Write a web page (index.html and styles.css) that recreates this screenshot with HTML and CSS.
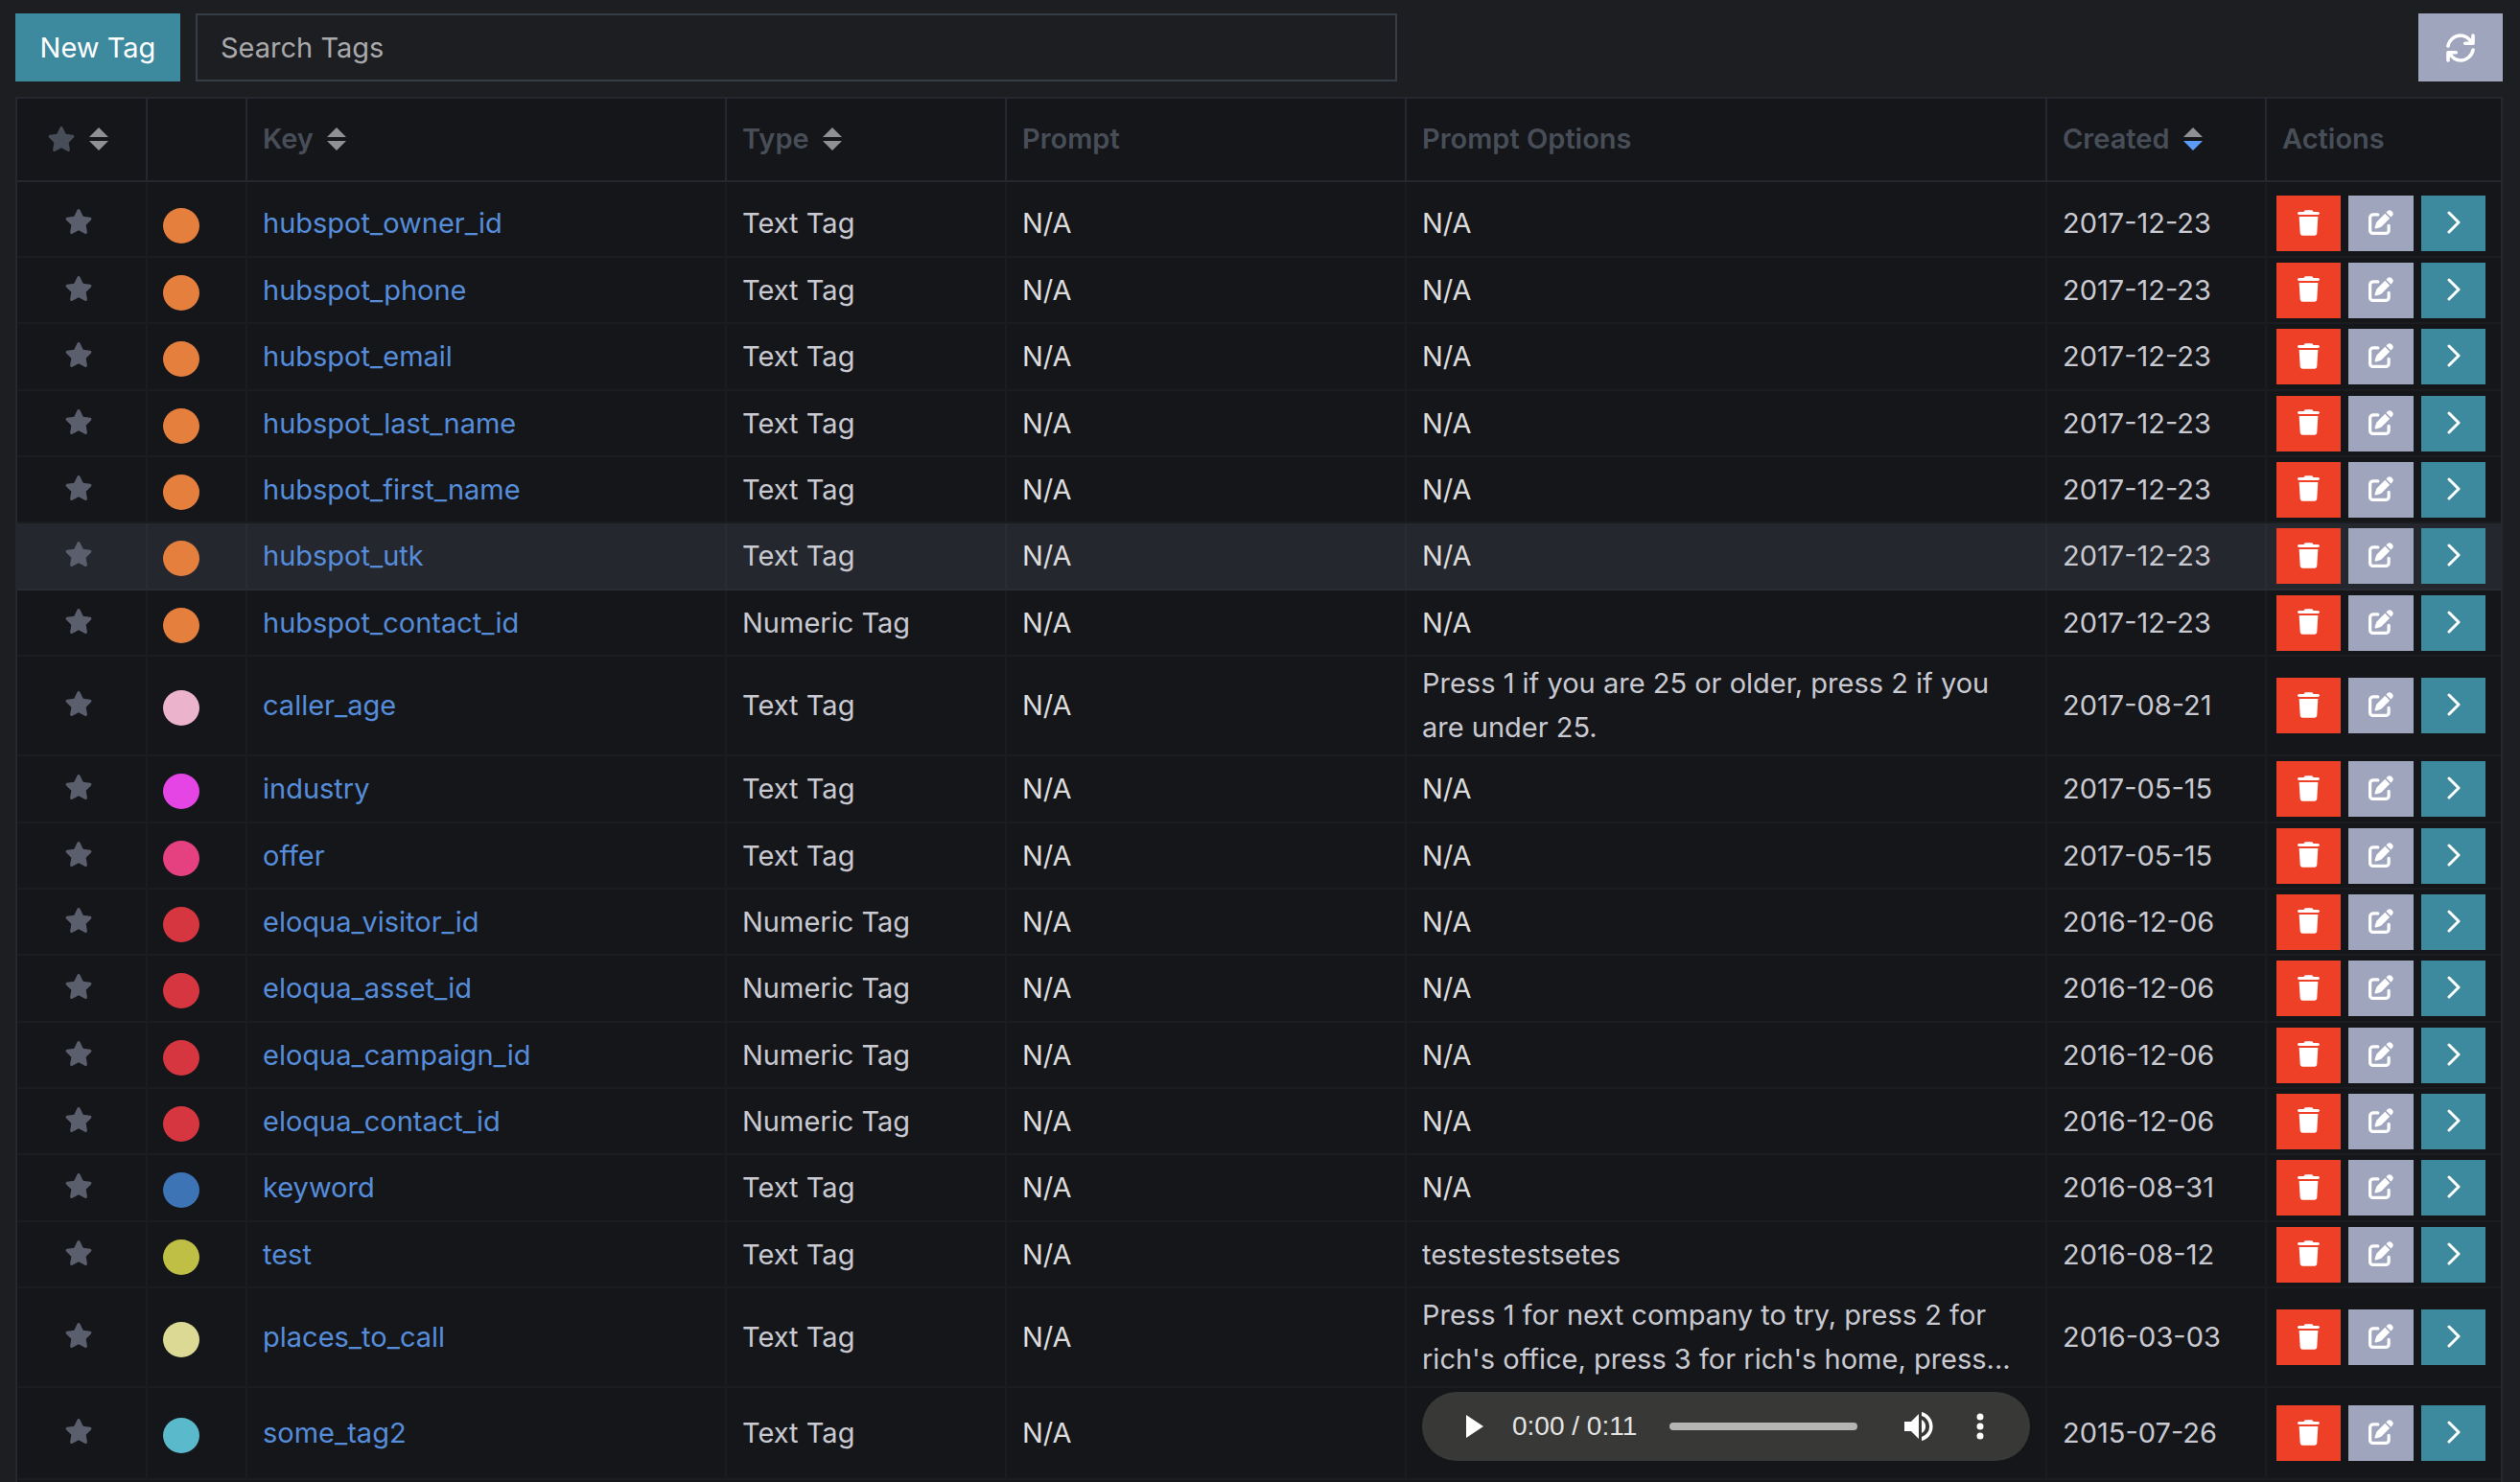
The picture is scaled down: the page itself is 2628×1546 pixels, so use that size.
FILE: index.html
```html
<!DOCTYPE html>
<html lang="en">
<head>
<meta charset="utf-8">
<title>Tags</title>
<link rel="stylesheet" href="styles.css">
</head>
<body>
<svg class="sprite" aria-hidden="true">
  <symbol id="star" viewBox="0 0 576 512"><path fill="currentColor" d="M316.900 18C311.600 7 300.400 0 288.100 0s-23.400 7-28.800 18L195 150.300 51.400 171.500c-12 1.800-22 10.200-25.700 21.700s-.7 24.200 7.900 32.700L137.800 329 113.200 474.700c-2 12 3 24.200 12.900 31.300s23 8 33.800 2.300l128.300-68.500 128.300 68.500c10.800 5.700 23.900 4.900 33.800-2.300s14.900-19.300 12.900-31.300L438.500 329 542.700 225.900c8.600-8.500 11.700-21.200 7.900-32.700s-13.700-19.900-25.700-21.700L381.200 150.300 316.900 18z"/></symbol>
  <symbol id="trash" viewBox="0 0 448 512"><path fill="currentColor" d="M135.200 17.700L128 32H32C14.300 32 0 46.300 0 60s14.300 28 32 28h384c17.700 0 32-14.300 32-28s-14.300-28-32-28h-96l-7.200-14.300C307.400 6.800 296.300 0 284.200 0H163.800c-12.100 0-23.200 6.800-28.600 17.700zM416 128H32l21.200 339c1.600 25.300 22.600 45 47.900 45h245.800c25.300 0 46.300-19.700 47.900-45L416 128z"/></symbol>
  <symbol id="edit" viewBox="0 0 512 512"><path fill="currentColor" d="M471.600 21.700c-21.900-21.900-57.300-21.900-79.200 0l-30.100 30 97.900 97.900 30.100-30.100c21.900-21.900 21.900-57.300 0-79.200l-18.700-18.600zm-299.200 220c-6.100 6.100-10.800 13.600-13.500 21.900l-29.600 88.800c-2.900 8.600-.6 18.100 5.800 24.600s15.900 8.700 24.600 5.800l88.800-29.600c8.200-2.700 15.700-7.400 21.900-13.500l167.300-167.400-98-98-167.300 167.400zM96 64c-53 0-96 43-96 96v256c0 53 43 96 96 96h256c53 0 96-43 96-96v-96c0-17.700-14.300-32-32-32s-32 14.300-32 32v96c0 17.700-14.300 32-32 32H96c-17.700 0-32-14.300-32-32V160c0-17.700 14.300-32 32-32h96c17.700 0 32-14.300 32-32s-14.300-32-32-32H96z"/></symbol>
  <symbol id="next" viewBox="0 0 14 24"><path fill="none" stroke="currentColor" stroke-width="3" stroke-linecap="round" stroke-linejoin="round" d="M2 2l10 10L2 22"/></symbol>
  <symbol id="sort" viewBox="0 0 20 24"><path class="sort-up" d="M10 0l10 10H0z"/><path class="sort-down" d="M0 14h20L10 24z"/></symbol>
</svg>
<header class="toolbar">
  <button class="btn new-tag" type="button">New Tag</button>
  <input class="search" type="text" placeholder="Search Tags" aria-label="Search Tags">
  <button class="btn refresh" type="button" aria-label="Refresh"><svg viewBox="0 0 30 30" fill="none" stroke="currentColor" stroke-width="3.600" stroke-linecap="round" stroke-linejoin="round"><path d="M2 13C3 7 8.500 2 15 2c4.500 0 8 2 11.500 7M28 2v8.300h-8.300M28 17c-1 6-6.500 11-13 11-4.500 0-8-2-11.500-7M2 28v-8.300h8.300"/></svg></button>
</header>
<main class="panel">
<table>
  <colgroup><col class="c-fav"><col class="c-color"><col class="c-key"><col class="c-type"><col class="c-prompt"><col><col class="c-created"><col class="c-actions"></colgroup>
  <thead><tr>
    <th class="fav-head" scope="col" aria-label="Favorite"><span class="sorter"><svg class="star"><use href="#star"/></svg><svg class="sort"><use href="#sort"/></svg></span></th>
    <th scope="col" aria-label="Color"></th>
    <th scope="col"><span class="sorter">Key<svg class="sort"><use href="#sort"/></svg></span></th>
    <th scope="col"><span class="sorter">Type<svg class="sort"><use href="#sort"/></svg></span></th>
    <th scope="col">Prompt</th>
    <th scope="col">Prompt Options</th>
    <th scope="col" aria-sort="descending"><span class="sorter">Created<svg class="sort descending"><use href="#sort"/></svg></span></th>
    <th scope="col">Actions</th>
  </tr></thead>
  <tbody id="rows"></tbody>
</table>
</main>
<script src="tags.js"></script>
</body>
</html>
```
FILE: styles.css
```css
* { box-sizing: border-box; }

body {
  margin: 0;
  padding: 14px 18px 0 16px;
  min-height: 100vh;
  display: flex;
  flex-direction: column;
  gap: 16px;
  background: #1d1e22;
  color: #c9cad1;
  font: 400 29px/46px Inter, "Noto Sans", sans-serif;
}

button, input { font: inherit; }
svg { display: block; }
.sprite { position: absolute; width: 0; height: 0; }

.toolbar { display: flex; gap: 16px; }
.btn {
  display: flex;
  align-items: center;
  justify-content: center;
  padding: 0;
  border: 0;
  color: #fff;
  cursor: pointer;
}
.new-tag { width: 172px; height: 71px; background: #3d8a9e; }
.search {
  flex: 0 1 1253px;
  min-width: 0;
  height: 71px;
  padding: 0 24px;
  border: 2px solid #363d47;
  background: transparent;
  color: #dcdcdc;
}
.search::placeholder { color: #a9a9ac; opacity: 1; }
.refresh { width: 88px; height: 71px; margin-left: auto; background: #9ea5bd; }
.refresh svg { width: 30px; height: 30px; }

.panel {
  flex: 1;
  border: 2px solid #26272e;
  border-bottom: 0;
  background: #15161a;
}
table { width: 100%; table-layout: fixed; border-collapse: separate; border-spacing: 0; }
.c-fav { width: 136px; }
.c-color { width: 104px; }
.c-key { width: 500px; }
.c-type { width: 292px; }
.c-prompt { width: 417px; }
.c-created { width: 229px; }
.c-actions { width: 244px; }

th, td {
  padding: 0 16px;
  border-right: 2px solid #1b1c20;
  border-bottom: 2px solid #1b1c20;
  text-align: left;
  vertical-align: middle;
}
th {
  height: 87px;
  padding-bottom: 2px;
  border-color: #26272e;
  color: #484e58;
  font-weight: 600;
}
th:last-child, td:last-child { border-right: 0; }
.sorter { display: flex; align-items: center; gap: 14px; }
.fav-head .sorter { justify-content: center; padding-right: 8px; }
.sort { --down: #8f9094; width: 20px; height: 24px; }
.sort.descending { --down: #5a9bf8; }
.sort-up { fill: #8f9094; }
.sort-down { fill: var(--down); }
.star { width: 30px; height: 26px; }

td { height: 69px; }
tr:nth-child(3n) td { height: 70px; }
tr:first-child td { height: 79px; padding-top: 9px; }
tr.two-line td { height: 104px; }
tr.media td { height: 96px; }
tr.active td { background: #25272e; border-color: #2a2c33; }

td .star { margin: 0 auto; color: #5b5f6d; }
td.favorite { padding-right: 22px; padding-bottom: 4px; }
td.color { padding-top: 5px; }
tr:first-child td.color { padding-top: 14px; }
.dot { display: block; width: 38px; height: 37px; border-radius: 50%; }
a { color: #568ddb; text-decoration: none; }
.prompt, .plain { color: #dcdcdc; }
td.actions { padding-left: 10px; }
.buttons { display: flex; gap: 8px; }
.buttons .btn { flex: 1 1 67px; height: 58px; padding-bottom: 2px; }
.delete { background: #ee4027; }
.edit { background: #9ea5bd; }
.open { background: #3d8a9e; }
.delete svg { width: 23px; height: 27px; }
.edit svg { width: 26px; height: 26px; }
.buttons .open { padding-left: 2px; }
.open svg { width: 14px; height: 24px; }
.clamp {
  display: -webkit-box;
  overflow: hidden;
  -webkit-box-orient: vertical;
  -webkit-line-clamp: 2;
}

tr.media td.options { padding-bottom: 15px; }
.player {
  display: flex;
  align-items: center;
  height: 72px;
  padding: 0 48px 0 46px;
  border-radius: 36px;
  background: #383937;
  color: #fff;
  font: 400 28px/32px "Liberation Sans", sans-serif;
}
.player .btn { background: transparent; }
.player .play svg { width: 18px; height: 24px; }
.time { margin-left: 30px; color: #e4e4e4; white-space: nowrap; }
.seek {
  flex: 1;
  min-width: 0;
  height: 8px;
  margin: 0 48px 0 34px;
  appearance: none;
  border-radius: 4px;
  background: #b5b5b5;
}
.seek::-webkit-slider-thumb { appearance: none; width: 0; height: 0; }
.volume svg { width: 32px; height: 32px; }
.more { margin-left: 44px; }
.more svg { width: 8px; height: 28px; }
```
FILE: tags.js
```js
const tags = [
  ["hubspot_owner_id", "Text Tag", "N/A", "2017-12-23", "#e47f3e"],
  ["hubspot_phone", "Text Tag", "N/A", "2017-12-23", "#e47f3e"],
  ["hubspot_email", "Text Tag", "N/A", "2017-12-23", "#e47f3e"],
  ["hubspot_last_name", "Text Tag", "N/A", "2017-12-23", "#e47f3e"],
  ["hubspot_first_name", "Text Tag", "N/A", "2017-12-23", "#e47f3e"],
  ["hubspot_utk", "Text Tag", "N/A", "2017-12-23", "#e47f3e", "active"],
  ["hubspot_contact_id", "Numeric Tag", "N/A", "2017-12-23", "#e47f3e"],
  ["caller_age", "Text Tag", "Press 1 if you are 25 or older, press 2 if you are under 25.", "2017-08-21", "#ecb3cd", "two-line"],
  ["industry", "Text Tag", "N/A", "2017-05-15", "#e545e5"],
  ["offer", "Text Tag", "N/A", "2017-05-15", "#e5407f"],
  ["eloqua_visitor_id", "Numeric Tag", "N/A", "2016-12-06", "#d6363f"],
  ["eloqua_asset_id", "Numeric Tag", "N/A", "2016-12-06", "#d6363f"],
  ["eloqua_campaign_id", "Numeric Tag", "N/A", "2016-12-06", "#d6363f"],
  ["eloqua_contact_id", "Numeric Tag", "N/A", "2016-12-06", "#d6363f"],
  ["keyword", "Text Tag", "N/A", "2016-08-31", "#3c74b5"],
  ["test", "Text Tag", "testestestsetes", "2016-08-12", "#bfbe45"],
  ["places_to_call", "Text Tag", "Press 1 for next company to try, press 2 for rich's office, press 3 for rich's home, press...", "2016-03-03", "#dbd994", "two-line"],
  ["some_tag2", "Text Tag", null, "2015-07-26", "#5ab9cb", "media"]
];

const player = `<div class="player">
  <button class="btn play" type="button" aria-label="Play"><svg viewBox="0 0 18 24" fill="currentColor"><path d="M0 0l18 12L0 24z"/></svg></button>
  <span class="time">0:00 / 0:11</span>
  <input class="seek" type="range" value="0" aria-label="Seek">
  <button class="btn volume" type="button" aria-label="Mute"><svg viewBox="0 0 32 32" fill="currentColor"><path d="M1 11v10h7l8 8V3L8 11zM19 9v14a8 8 0 0 0 0-14zM19 1v4a11.500 11.500 0 0 1 0 22v4a15.500 15.500 0 0 0 0-30z"/></svg></button>
  <button class="btn more" type="button" aria-label="More options"><svg viewBox="0 0 8 28" fill="currentColor"><circle cx="4" cy="4" r="3.500"/><circle cx="4" cy="14" r="3.500"/><circle cx="4" cy="24" r="3.500"/></svg></button>
</div>`;

document.getElementById("rows").innerHTML = tags.map(([key, type, options, created, color, kind = ""]) => `
<tr class="${kind}">
  <td class="favorite"><svg class="star"><use href="#star"/></svg></td>
  <td class="color"><span class="dot" style="background:${color}"></span></td>
  <td><a href="#">${key}</a></td>
  <td>${type}</td>
  <td class="prompt">N/A</td>
  <td class="options${options === "N/A" ? " plain" : ""}">${options ? `<div class="clamp">${options}</div>` : player}</td>
  <td>${created}</td>
  <td class="actions"><div class="buttons">
    <button class="btn delete" type="button" aria-label="Delete ${key}"><svg><use href="#trash"/></svg></button>
    <button class="btn edit" type="button" aria-label="Edit ${key}"><svg><use href="#edit"/></svg></button>
    <button class="btn open" type="button" aria-label="Open ${key}"><svg><use href="#next"/></svg></button>
  </div></td>
</tr>`).join("");
```
